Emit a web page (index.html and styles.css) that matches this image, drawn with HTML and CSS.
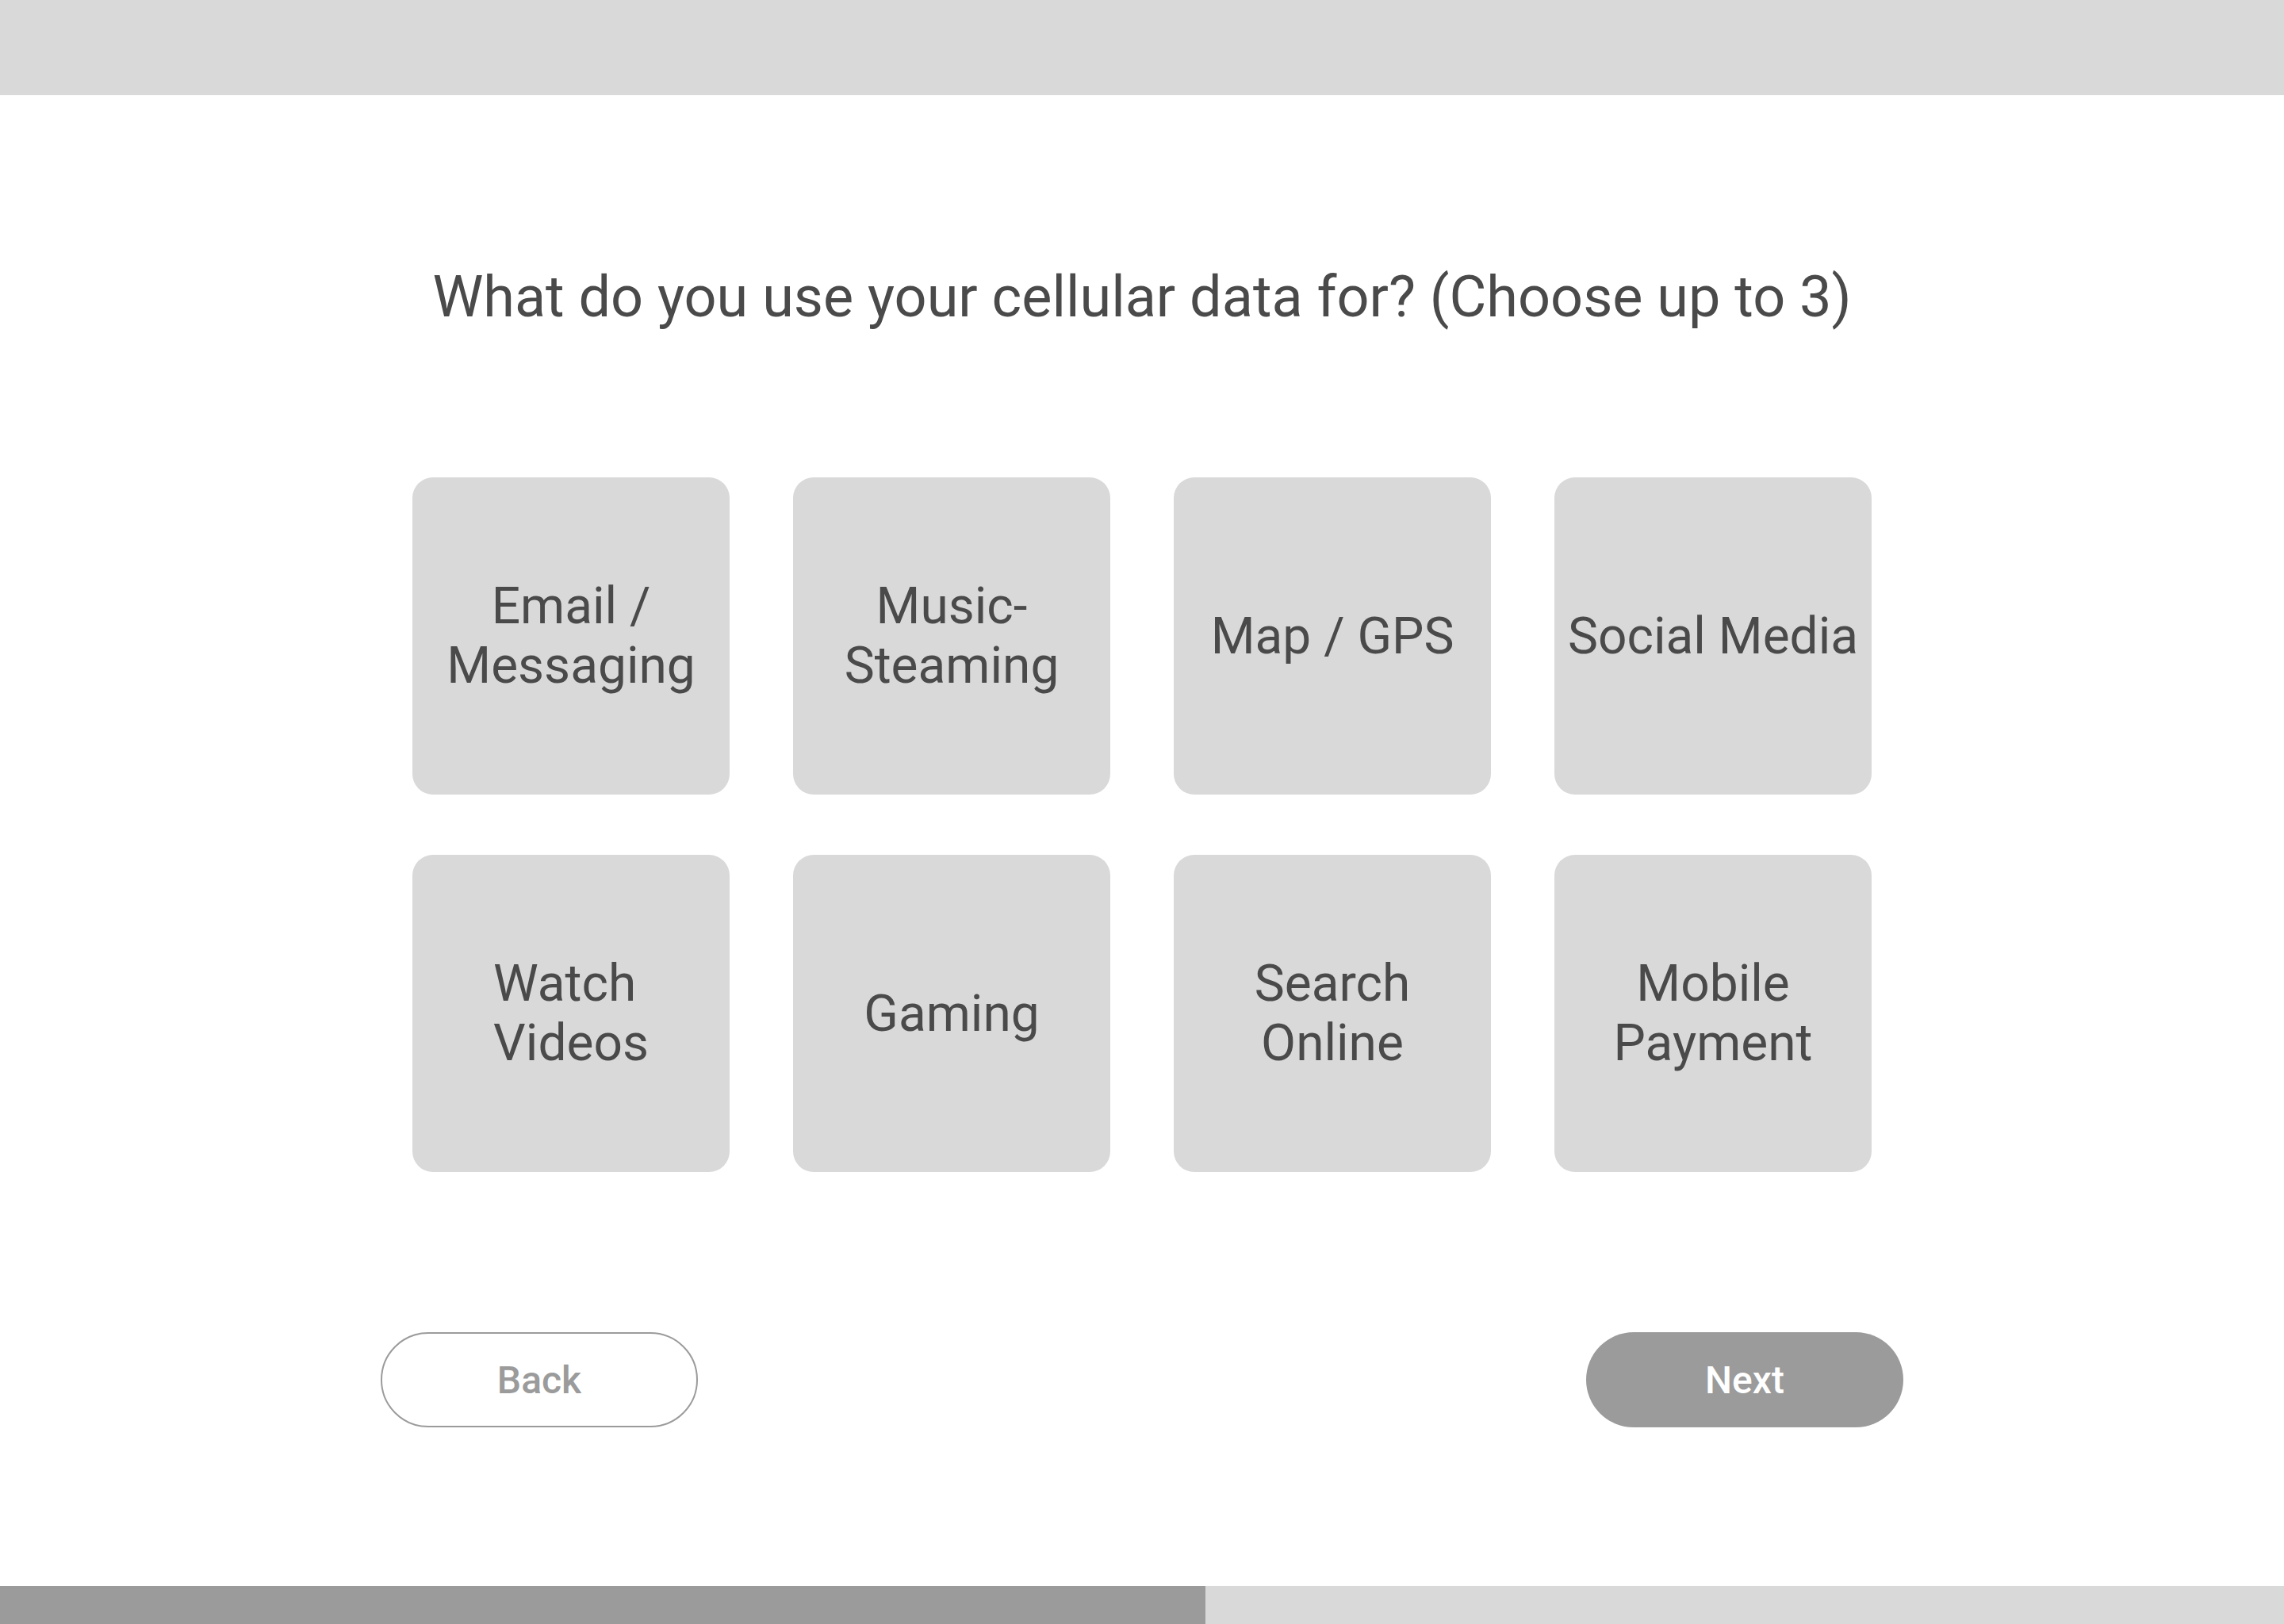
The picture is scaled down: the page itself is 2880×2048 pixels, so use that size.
FILE: index.html
```html
<!DOCTYPE html>
<html lang="en">
<head>
<meta charset="utf-8">
<title>Cellular data usage</title>
<link rel="stylesheet" href="styles.css">
</head>
<body>
<div class="page">
  <header class="topbar"></header>
  <main class="content">
    <h1 class="question">What do you use your cellular data for? (Choose up to 3)</h1>
    <div class="options">
      <button class="option">Email /<br>Messaging</button>
      <button class="option">Music-<br>Steaming</button>
      <button class="option">Map / GPS</button>
      <button class="option">Social Media</button>
      <button class="option">Watch&nbsp;<br>Videos</button>
      <button class="option">Gaming</button>
      <button class="option">Search<br>Online</button>
      <button class="option">Mobile<br>Payment</button>
    </div>
    <div class="nav">
      <button class="btn btn-back">Back</button>
      <button class="btn btn-next">Next</button>
    </div>
  </main>
  <footer class="progress">
    <div class="progress-fill" style="width: 1520px"></div>
  </footer>
</div>
</body>
</html>
```

FILE: styles.css
```css
* { box-sizing: border-box; }

html, body {
  margin: 0;
  padding: 0;
  background: #ffffff;
}

body {
  font-family: Roboto, "Liberation Sans", sans-serif;
  color: #4a4a4a;
}

.page {
  width: 2880px;
  height: 2048px;
  display: flex;
  flex-direction: column;
}

.topbar {
  height: 120px;
  flex: 0 0 120px;
  background: #d9d9d9;
}

.content {
  flex: 1 1 auto;
  display: flex;
  flex-direction: column;
  align-items: center;
  padding-top: 211px;
}

.question {
  margin: 0;
  font-size: 72px;
  font-weight: 400;
  line-height: 88px;
  color: #4a4a4a;
  text-align: center;
  white-space: nowrap;
}

.options {
  margin-top: 183px;
  display: grid;
  grid-template-columns: repeat(4, 400px);
  grid-auto-rows: 400px;
  column-gap: 80px;
  row-gap: 76px;
}

.option {
  border: none;
  margin: 0;
  padding: 0;
  background: #d9d9d9;
  border-radius: 26px;
  font-family: Roboto, "Liberation Sans", sans-serif;
  font-size: 64px;
  font-weight: 400;
  line-height: 75px;
  color: #4a4a4a;
  display: flex;
  align-items: center;
  justify-content: center;
  text-align: center;
}

.nav {
  margin-top: 202px;
  width: 1920px;
  display: flex;
  justify-content: space-between;
}

.btn {
  width: 400px;
  height: 120px;
  border-radius: 60px;
  margin: 0;
  padding: 0;
  font-family: Roboto, "Liberation Sans", sans-serif;
  font-size: 48px;
  font-weight: 500;
  display: flex;
  align-items: center;
  justify-content: center;
}

.btn-back {
  background: #ffffff;
  border: 2px solid #9b9b9b;
  color: #9b9b9b;
}

.btn-next {
  background: #9b9b9b;
  border: none;
  color: #ffffff;
}

.progress {
  height: 48px;
  flex: 0 0 48px;
  background: #d9d9d9;
  display: flex;
}

.progress-fill {
  height: 100%;
  background: #9b9b9b;
}
```
